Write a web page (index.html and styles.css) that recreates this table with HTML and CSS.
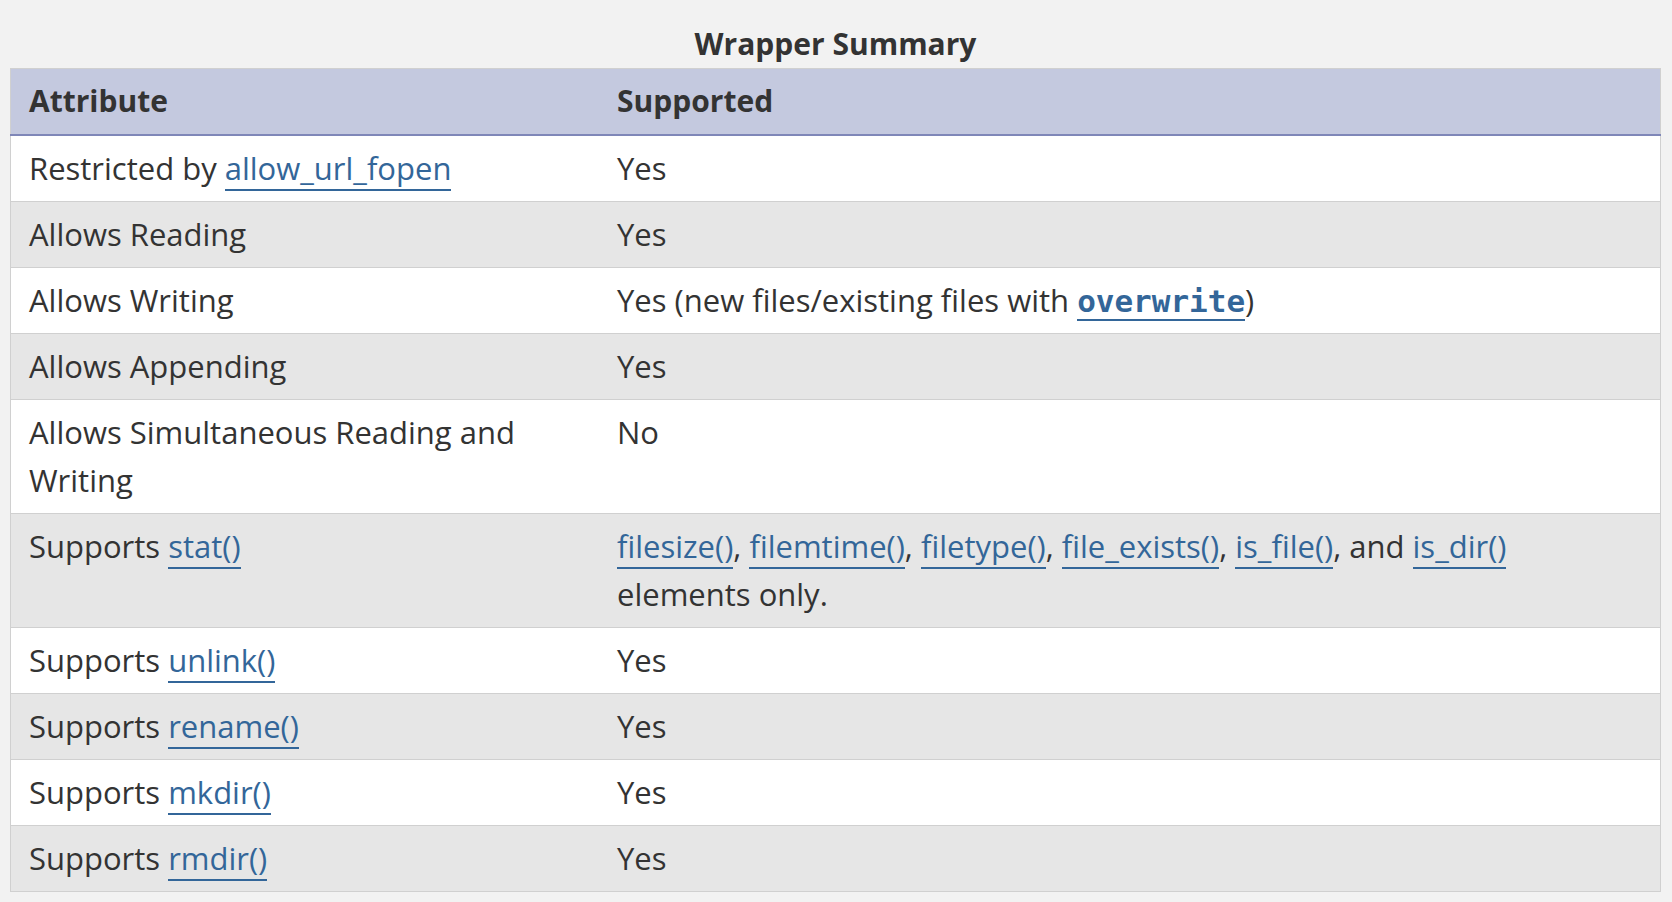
FILE: index.html
```html
<!DOCTYPE html>
<html lang="en">
<head>
  <meta charset="UTF-8" />
  <title>Wrapper Summary</title>
  <link rel="stylesheet" href="styles.css">
</head>
<body>

  <div class="page">
    <table class="doctable">
      <caption>Wrapper Summary</caption>
      <thead>
        <tr>
          <th class="col-attr">Attribute</th>
          <th>Supported</th>
        </tr>
      </thead>
      <tbody>
        <tr>
          <td>Restricted by <a href="#">allow_url_fopen</a></td>
          <td>Yes</td>
        </tr>
        <tr>
          <td>Allows Reading</td>
          <td>Yes</td>
        </tr>
        <tr>
          <td>Allows Writing</td>
          <td>Yes (new files/existing files with <code><a href="#">overwrite</a></code>)</td>
        </tr>
        <tr>
          <td>Allows Appending</td>
          <td>Yes</td>
        </tr>
        <tr>
          <td>Allows Simultaneous Reading and Writing</td>
          <td>No</td>
        </tr>
        <tr>
          <td>Supports <a href="#">stat()</a></td>
          <td><a href="#">filesize()</a>, <a href="#">filemtime()</a>, <a href="#">filetype()</a>, <a href="#">file_exists()</a>, <a href="#">is_file()</a>, and <a href="#">is_dir()</a> elements only.</td>
        </tr>
        <tr>
          <td>Supports <a href="#">unlink()</a></td>
          <td>Yes</td>
        </tr>
        <tr>
          <td>Supports <a href="#">rename()</a></td>
          <td>Yes</td>
        </tr>
        <tr>
          <td>Supports <a href="#">mkdir()</a></td>
          <td>Yes</td>
        </tr>
        <tr>
          <td>Supports <a href="#">rmdir()</a></td>
          <td>Yes</td>
        </tr>
      </tbody>
    </table>
  </div>

</body>
</html>
```

FILE: styles.css
```css
body {
  margin: 0;
  background-color: #f2f2f2;
  color: #333;
  font-family: 'Open Sans', 'Noto Sans', sans-serif;
  font-size: 31px;
  line-height: 48px;
}

.page {
  padding: 20px 11px 0 10px;
}

.doctable {
  width: 100%;
  border-collapse: collapse;
  border: 1px solid #d0d0d0;
}

.doctable caption {
  font-size: 30px;
  font-weight: bold;
  text-align: center;
}

.doctable th,
.doctable td {
  text-align: left;
  vertical-align: top;
  padding: 8px 18px 9px 18px;
}

.doctable th {
  font-size: 30px;
  background-color: #c4c9df;
  border-bottom: 2px solid #7f87b8;
  font-weight: bold;
}

.doctable .col-attr {
  width: 552px;
}

.doctable td {
  border-top: 1px solid #d0d0d0;
}

.doctable tbody tr:nth-child(odd) {
  background-color: #ffffff;
}

.doctable tbody tr:nth-child(even) {
  background-color: #e6e6e6;
}

a {
  color: #336699;
  text-decoration: none;
  border-bottom: 2px solid #336699;
}

code {
  font-family: 'DejaVu Sans Mono', monospace;
  font-weight: bold;
  font-size: 31px;
  line-height: 1;
}
```
